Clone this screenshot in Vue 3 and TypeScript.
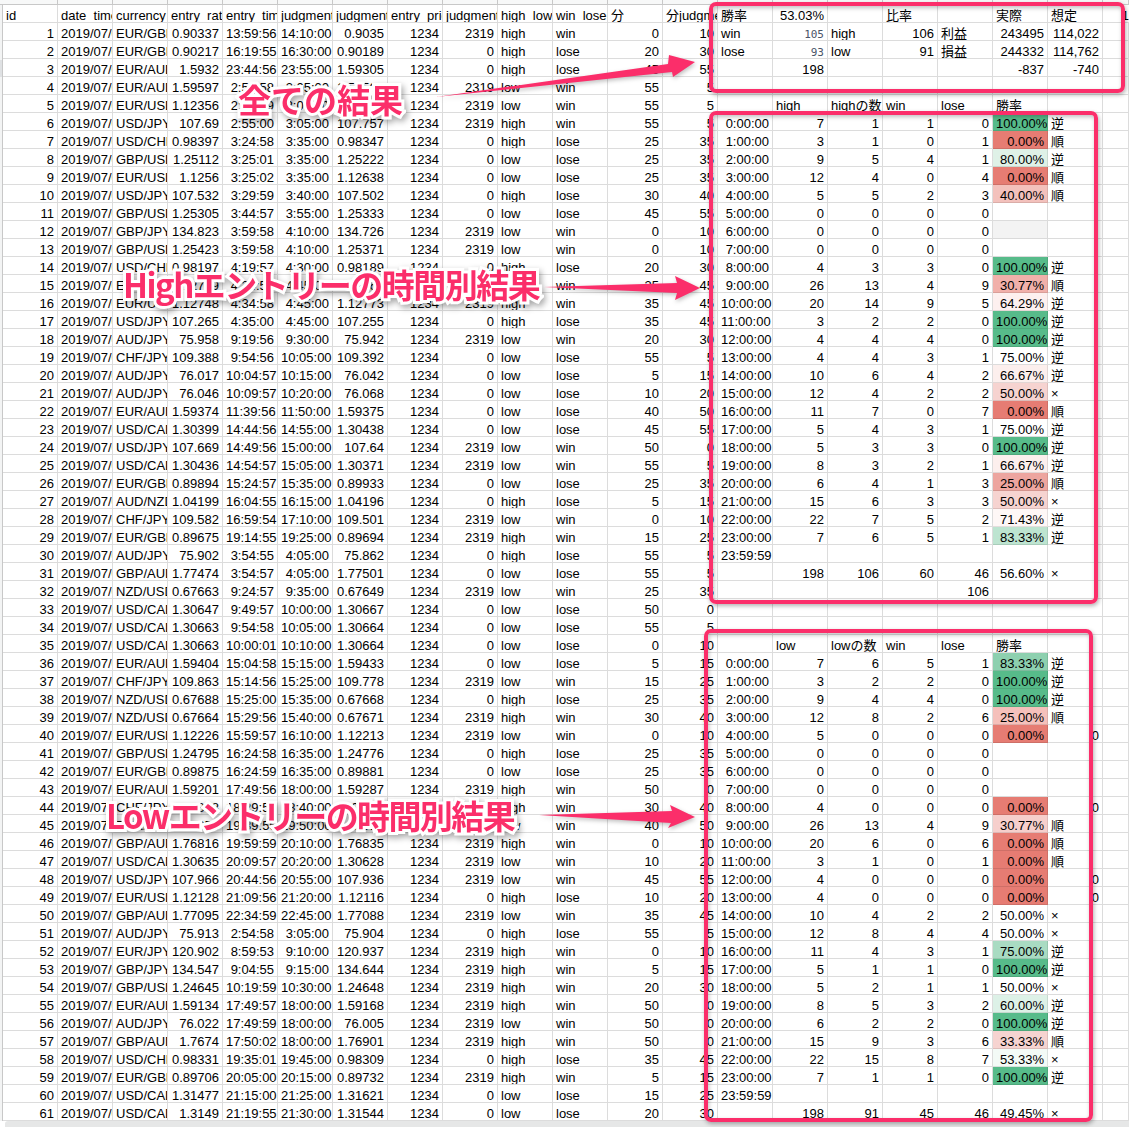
<script setup lang="ts">
type Cell = { t: string; right: boolean; bg?: string; kind?: string }

const G = '#57bb8a'
const R = '#e67c73'

const main: string = `EUR/GBP|0.90337|13:59:56|14:10:00|0.9035|2319|high|win|0|10
EUR/GBP|0.90217|16:19:55|16:30:00|0.90189|0|high|lose|20|30
EUR/AUD|1.5932|23:44:56|23:55:00|1.59305|0|high|lose|45|55
EUR/AUD|1.59597|2:54:58|3:05:00|1.59566|2319|low|win|55|5
EUR/USD|1.12356|2:54:59|3:05:00|1.12309|2319|low|win|55|5
USD/JPY|107.69|2:55:00|3:05:00|107.757|2319|high|win|55|5
USD/CHF|0.98397|3:24:58|3:35:00|0.98347|0|high|lose|25|35
GBP/USD|1.25112|3:25:01|3:35:00|1.25222|0|low|lose|25|35
EUR/USD|1.1256|3:25:02|3:35:00|1.12638|0|low|lose|25|35
USD/JPY|107.532|3:29:59|3:40:00|107.502|0|high|lose|30|40
GBP/USD|1.25305|3:44:57|3:55:00|1.25333|0|low|lose|45|55
GBP/JPY|134.823|3:59:58|4:10:00|134.726|2319|low|win|0|10
GBP/USD|1.25423|3:59:58|4:10:00|1.25371|2319|low|win|0|10
USD/CHF|0.98197|4:19:57|4:30:00|0.98189|0|high|lose|20|30
EUR/USD|1.12739|4:34:57|4:45:00|1.12765|2319|high|win|35|45
EUR/USD|1.12748|4:34:58|4:45:00|1.12773|2319|high|win|35|45
USD/JPY|107.265|4:35:00|4:45:00|107.255|0|high|lose|35|45
AUD/JPY|75.958|9:19:56|9:30:00|75.942|2319|low|win|20|30
CHF/JPY|109.388|9:54:56|10:05:00|109.392|0|low|lose|55|5
AUD/JPY|76.017|10:04:57|10:15:00|76.042|0|low|lose|5|15
AUD/JPY|76.046|10:09:57|10:20:00|76.068|0|low|lose|10|20
EUR/AUD|1.59374|11:39:56|11:50:00|1.59375|0|low|lose|40|50
USD/CAD|1.30399|14:44:56|14:55:00|1.30438|0|low|lose|45|55
USD/JPY|107.669|14:49:56|15:00:00|107.64|2319|low|win|50|0
USD/CAD|1.30436|14:54:57|15:05:00|1.30371|2319|low|win|55|5
EUR/GBP|0.89894|15:24:57|15:35:00|0.89933|0|low|lose|25|35
AUD/NZD|1.04199|16:04:55|16:15:00|1.04196|0|high|lose|5|15
CHF/JPY|109.582|16:59:54|17:10:00|109.501|2319|low|win|0|10
EUR/GBP|0.89675|19:14:55|19:25:00|0.89694|2319|high|win|15|25
AUD/JPY|75.902|3:54:55|4:05:00|75.862|0|high|lose|55|5
GBP/AUD|1.77474|3:54:57|4:05:00|1.77501|0|low|lose|55|5
NZD/USD|0.67663|9:24:57|9:35:00|0.67649|2319|low|win|25|35
USD/CAD|1.30647|9:49:57|10:00:00|1.30667|0|low|lose|50|0
USD/CAD|1.30663|9:54:58|10:05:00|1.30664|0|low|lose|55|5
USD/CAD|1.30663|10:00:01|10:10:00|1.30664|0|low|lose|0|10
EUR/AUD|1.59404|15:04:58|15:15:00|1.59433|0|low|lose|5|15
CHF/JPY|109.863|15:14:56|15:25:00|109.778|2319|low|win|15|25
NZD/USD|0.67688|15:25:00|15:35:00|0.67668|0|high|lose|25|35
NZD/USD|0.67664|15:29:56|15:40:00|0.67671|2319|high|win|30|40
EUR/USD|1.12226|15:59:57|16:10:00|1.12213|2319|low|win|0|10
GBP/USD|1.24795|16:24:58|16:35:00|1.24776|0|high|lose|25|35
EUR/GBP|0.89875|16:24:59|16:35:00|0.89881|0|low|lose|25|35
EUR/AUD|1.59201|17:49:56|18:00:00|1.59287|2319|high|win|50|0
CHF/JPY|109.838|18:29:56|18:40:00|109.812|2319|high|win|30|40
EUR/USD|1.12055|19:39:56|19:50:00|1.12031|2319|low|win|40|50
GBP/AUD|1.76816|19:59:59|20:10:00|1.76835|2319|high|win|0|10
USD/CAD|1.30635|20:09:57|20:20:00|1.30628|2319|low|win|10|20
USD/JPY|107.966|20:44:56|20:55:00|107.936|2319|low|win|45|55
EUR/USD|1.12128|21:09:56|21:20:00|1.12116|0|high|lose|10|20
GBP/AUD|1.77095|22:34:59|22:45:00|1.77088|2319|low|win|35|45
AUD/JPY|75.913|2:54:58|3:05:00|75.904|0|high|lose|55|5
EUR/JPY|120.902|8:59:53|9:10:00|120.937|2319|high|win|0|10
GBP/JPY|134.547|9:04:55|9:15:00|134.644|2319|high|win|5|15
GBP/USD|1.24645|10:19:59|10:30:00|1.24648|2319|high|win|20|30
EUR/AUD|1.59134|17:49:57|18:00:00|1.59168|2319|high|win|50|0
AUD/JPY|76.022|17:49:59|18:00:00|76.005|2319|low|win|50|0
GBP/AUD|1.7674|17:50:02|18:00:00|1.76901|2319|high|win|50|0
USD/CHF|0.98331|19:35:01|19:45:00|0.98309|0|high|lose|35|45
EUR/GBP|0.89706|20:05:00|20:15:00|0.89732|2319|high|win|5|15
USD/CAD|1.31477|21:15:00|21:25:00|1.31621|0|low|lose|15|25
USD/CAD|1.3149|21:19:55|21:30:00|1.31544|0|low|lose|20|30`

const highTable: string[][] = [
  ['0:00:00', '7', '1', '1', '0', '100.00%', '逆', G],
  ['1:00:00', '3', '1', '0', '1', '0.00%', '順', R],
  ['2:00:00', '9', '5', '4', '1', '80.00%', '逆', '#dff1e7'],
  ['3:00:00', '12', '4', '0', '4', '0.00%', '順', R],
  ['4:00:00', '5', '5', '2', '3', '40.00%', '順', '#f3c1bc'],
  ['5:00:00', '0', '0', '0', '0', '', '', ''],
  ['6:00:00', '0', '0', '0', '0', '', '', '#f3f3f3'],
  ['7:00:00', '0', '0', '0', '0', '', '', ''],
  ['8:00:00', '4', '3', '3', '0', '100.00%', '逆', G],
  ['9:00:00', '26', '13', '4', '9', '30.77%', '順', '#f1b0aa'],
  ['10:00:00', '20', '14', '9', '5', '64.29%', '逆', '#fdf0ef'],
  ['11:00:00', '3', '2', '2', '0', '100.00%', '逆', G],
  ['12:00:00', '4', '4', '4', '0', '100.00%', '逆', G],
  ['13:00:00', '4', '4', '3', '1', '75.00%', '逆', ''],
  ['14:00:00', '10', '6', '4', '2', '66.67%', '逆', '#fcefed'],
  ['15:00:00', '12', '4', '2', '2', '50.00%', '×', '#f6d3d0'],
  ['16:00:00', '11', '7', '0', '7', '0.00%', '順', R],
  ['17:00:00', '5', '4', '3', '1', '75.00%', '逆', ''],
  ['18:00:00', '5', '3', '3', '0', '100.00%', '逆', G],
  ['19:00:00', '8', '3', '2', '1', '66.67%', '逆', '#fcefed'],
  ['20:00:00', '6', '4', '1', '3', '25.00%', '順', '#eda59f'],
  ['21:00:00', '15', '6', '3', '3', '50.00%', '×', '#f6d3d0'],
  ['22:00:00', '22', '7', '5', '2', '71.43%', '逆', '#fef7f6'],
  ['23:00:00', '7', '6', '5', '1', '83.33%', '逆', '#bde4d0'],
  ['23:59:59', '', '', '', '', '', '', ''],
  ['', '198', '106', '60', '46', '56.60%', '×', ''],
  ['', '', '', '', '106', '', '', '']
]

const lowTable: string[][] = [
  ['0:00:00', '7', '6', '5', '1', '83.33%', '逆', '#8dd0af'],
  ['1:00:00', '3', '2', '2', '0', '100.00%', '逆', G],
  ['2:00:00', '9', '4', '4', '0', '100.00%', '逆', G],
  ['3:00:00', '12', '8', '2', '6', '25.00%', '順', '#f5c0bb'],
  ['4:00:00', '5', '0', '0', '0', '0.00%', '0', R],
  ['5:00:00', '0', '0', '0', '0', '', '', ''],
  ['6:00:00', '0', '0', '0', '0', '', '', ''],
  ['7:00:00', '0', '0', '0', '0', '', '', ''],
  ['8:00:00', '4', '0', '0', '0', '0.00%', '0', R],
  ['9:00:00', '26', '13', '4', '9', '30.77%', '順', '#f6cfcc'],
  ['10:00:00', '20', '6', '0', '6', '0.00%', '順', R],
  ['11:00:00', '3', '1', '0', '1', '0.00%', '順', R],
  ['12:00:00', '4', '0', '0', '0', '0.00%', '0', R],
  ['13:00:00', '4', '0', '0', '0', '0.00%', '0', R],
  ['14:00:00', '10', '4', '2', '2', '50.00%', '×', ''],
  ['15:00:00', '12', '8', '4', '4', '50.00%', '×', ''],
  ['16:00:00', '11', '4', '3', '1', '75.00%', '逆', '#a9dbc2'],
  ['17:00:00', '5', '1', '1', '0', '100.00%', '逆', G],
  ['18:00:00', '5', '2', '1', '1', '50.00%', '×', ''],
  ['19:00:00', '8', '5', '3', '2', '60.00%', '逆', '#ddf1e7'],
  ['20:00:00', '6', '2', '2', '0', '100.00%', '逆', G],
  ['21:00:00', '15', '9', '3', '6', '33.33%', '順', '#f6d3d0'],
  ['22:00:00', '22', '15', '8', '7', '53.33%', '×', '#f3faf6'],
  ['23:00:00', '7', '1', '1', '0', '100.00%', '逆', G],
  ['23:59:59', '', '', '', '', '', '', ''],
  ['', '198', '91', '45', '46', '49.45%', '×', '']
]

const side: Record<number, string[]> = {
  0: ['勝率', '53.03%', '', '比率', '', '実際', '想定'],
  1: ['win', '105', 'high', '106', '利益', '243495', '114,022'],
  2: ['lose', '93', 'low', '91', '損益', '244332', '114,762'],
  3: ['', '198', '', '', '', '-837', '-740'],
  5: ['', 'high', 'highの数', 'win', 'lose', '勝率', ''],
  35: ['', 'low', 'lowの数', 'win', 'lose', '勝率', '']
}
highTable.forEach((row, i) => { side[6 + i] = row })
lowTable.forEach((row, i) => { side[36 + i] = row })

const header = ['id', 'date  time', 'currency', 'entry  rate', 'entry  time', 'judgment', 'judgment', 'entry  price', 'judgment', 'high  low', 'win  lose', '分', '分judgment']

const isNum = (s: string) => /^-?[\d,.:]+%?$/.test(s)
const cell = (t: string, bg?: string, kind?: string): Cell => ({ t, right: isNum(t), bg: bg || undefined, kind })

const cells: Cell[] = []
const rows = main.split('\n').map((l) => l.split('|'))
for (let r = 0; r < 62; r++) {
  if (r === 0) {
    header.forEach((h) => cells.push({ t: h, right: false }))
  } else {
    const d = rows[r - 1]
    const line = [String(r), '2019/07/01', d[0], d[1], d[2], d[3], d[4], '1234', d[5], d[6], d[7], d[8], d[9]]
    line.forEach((v) => cells.push(cell(v)))
  }
  const s = side[r]
  for (let c = 0; c < 7; c++) {
    const v = s ? s[c] || '' : ''
    const bg = s && c === 5 && s[7] ? s[7] : undefined
    const odd = (r === 1 || r === 2) && c === 1 ? 'sub' : undefined
    cells.push(cell(v, bg, odd))
  }
  cells.push(r === 0 ? { t: '1', right: true, kind: 'edge' } : cell(''))
}

const tops = Array.from({ length: 21 }, (_, i) => i)
</script>

<template>
  <div class="page">
    <div class="colbar">
      <span v-for="t in tops" :key="t" class="colhead"></span>
    </div>
    <div class="body">
      <div class="gutter"><div class="active-row"></div></div>
      <div class="grid">
        <div
          v-for="(c, i) in cells"
          :key="i"
          class="cell"
          :class="[{ right: c.right, heat: c.bg }, c.kind]"
          :style="c.bg ? { background: c.bg } : undefined"
        >{{ c.t }}</div>
      </div>
    </div>
    <div class="scrollbar"><div class="thumb"></div></div>

    <div class="frame f1"></div>
    <div class="frame f2"></div>
    <div class="frame f3"></div>

    <svg class="arrows" width="1129" height="1127" viewBox="0 0 1129 1127">
      <g fill="#fb2e6a">
        <polygon points="436,97 668,64 669,55 695,62 673,77 672,72" />
        <polygon points="544,287 677,283 675,276 700,288 675,300 677,293" />
        <polygon points="539,815 672,811 670,805 695,817 668,828 671,823" />
      </g>
    </svg>

    <div class="label l1">全ての結果</div>
    <div class="label l2">Highエントリーの時間別結果</div>
    <div class="label l3">Lowエントリーの時間別結果</div>
  </div>
</template>

<style scoped>
.page {
  position: relative;
  width: 1129px;
  height: 1127px;
  overflow: hidden;
  background: #fff;
  font-family: "Liberation Sans", "Noto Sans CJK JP", sans-serif;
  font-size: 13px;
  color: #000;
}
.colbar {
  display: grid;
  grid-template-columns: repeat(20, 55px) 26px;
  height: 5px;
  padding-left: 3px;
  background: #f7f8f8;
  border-bottom: 1px solid #c8c8c8;
  box-sizing: border-box;
}
.colhead {
  border-right: 1px solid #c8c8c8;
}
.body {
  display: flex;
  height: 1116px;
}
.gutter {
  width: 3px;
  flex: none;
  background: #f3f4f4;
  border-right: 1px solid #c8c8c8;
  box-sizing: border-box;
}
.active-row {
  margin-top: 55px;
  height: 17px;
  background: #dfe1e3;
}
.grid {
  display: grid;
  grid-template-columns: repeat(20, 55px) 26px;
  grid-auto-rows: 18px;
}
.cell {
  box-sizing: border-box;
  border-right: 1px solid #dcdcdc;
  border-bottom: 1px solid #dcdcdc;
  padding: 1px 3px 0;
  line-height: 19px;
  white-space: pre;
  overflow: hidden;
  text-align: left;
}
.cell.right {
  text-align: right;
}
.cell.heat {
  border-color: rgba(0, 0, 0, 0.1);
}
.cell.sub {
  font-family: "DejaVu Sans Mono", monospace;
  font-size: 11px;
  line-height: 21px;
  color: #4a5568;
}
.cell.edge {
  padding-right: 0;
  border-right: 0;
}
.scrollbar {
  height: 6px;
  padding-left: 5px;
  background: #fff;
}
.thumb {
  height: 6px;
  background: #e6e7e7;
  border-radius: 3px 0 0 0;
}
.frame {
  position: absolute;
  box-sizing: border-box;
  border: 4px solid #fb2e6a;
  border-radius: 7px;
  box-shadow: 1px 2px 4px rgba(0, 0, 0, 0.3), inset 1px 2px 4px rgba(0, 0, 0, 0.25);
}
.f1 {
  left: 709px;
  top: 2px;
  width: 416px;
  height: 91px;
}
.f2 {
  left: 709px;
  top: 111px;
  width: 389px;
  height: 493px;
}
.f3 {
  left: 704px;
  top: 629px;
  width: 389px;
  height: 493px;
}
.arrows {
  position: absolute;
  left: 0;
  top: 0;
  filter: drop-shadow(1px 2px 2px rgba(0, 0, 0, 0.25));
}
.label {
  position: absolute;
  font-family: "Noto Sans CJK JP", "Liberation Sans", sans-serif;
  font-weight: 700;
  font-size: 33px;
  line-height: 40px;
  white-space: nowrap;
  color: #fb2e6a;
  -webkit-text-stroke: 6px #fff;
  paint-order: stroke fill;
  filter: drop-shadow(2px 3px 3px rgba(0, 0, 0, 0.35));
}
.l1 {
  left: 238px;
  top: 79px;
}
.l2 {
  left: 123px;
  top: 264px;
  letter-spacing: -1.5px;
}
.l3 {
  left: 106px;
  top: 795px;
  letter-spacing: -1.6px;
}
</style>
